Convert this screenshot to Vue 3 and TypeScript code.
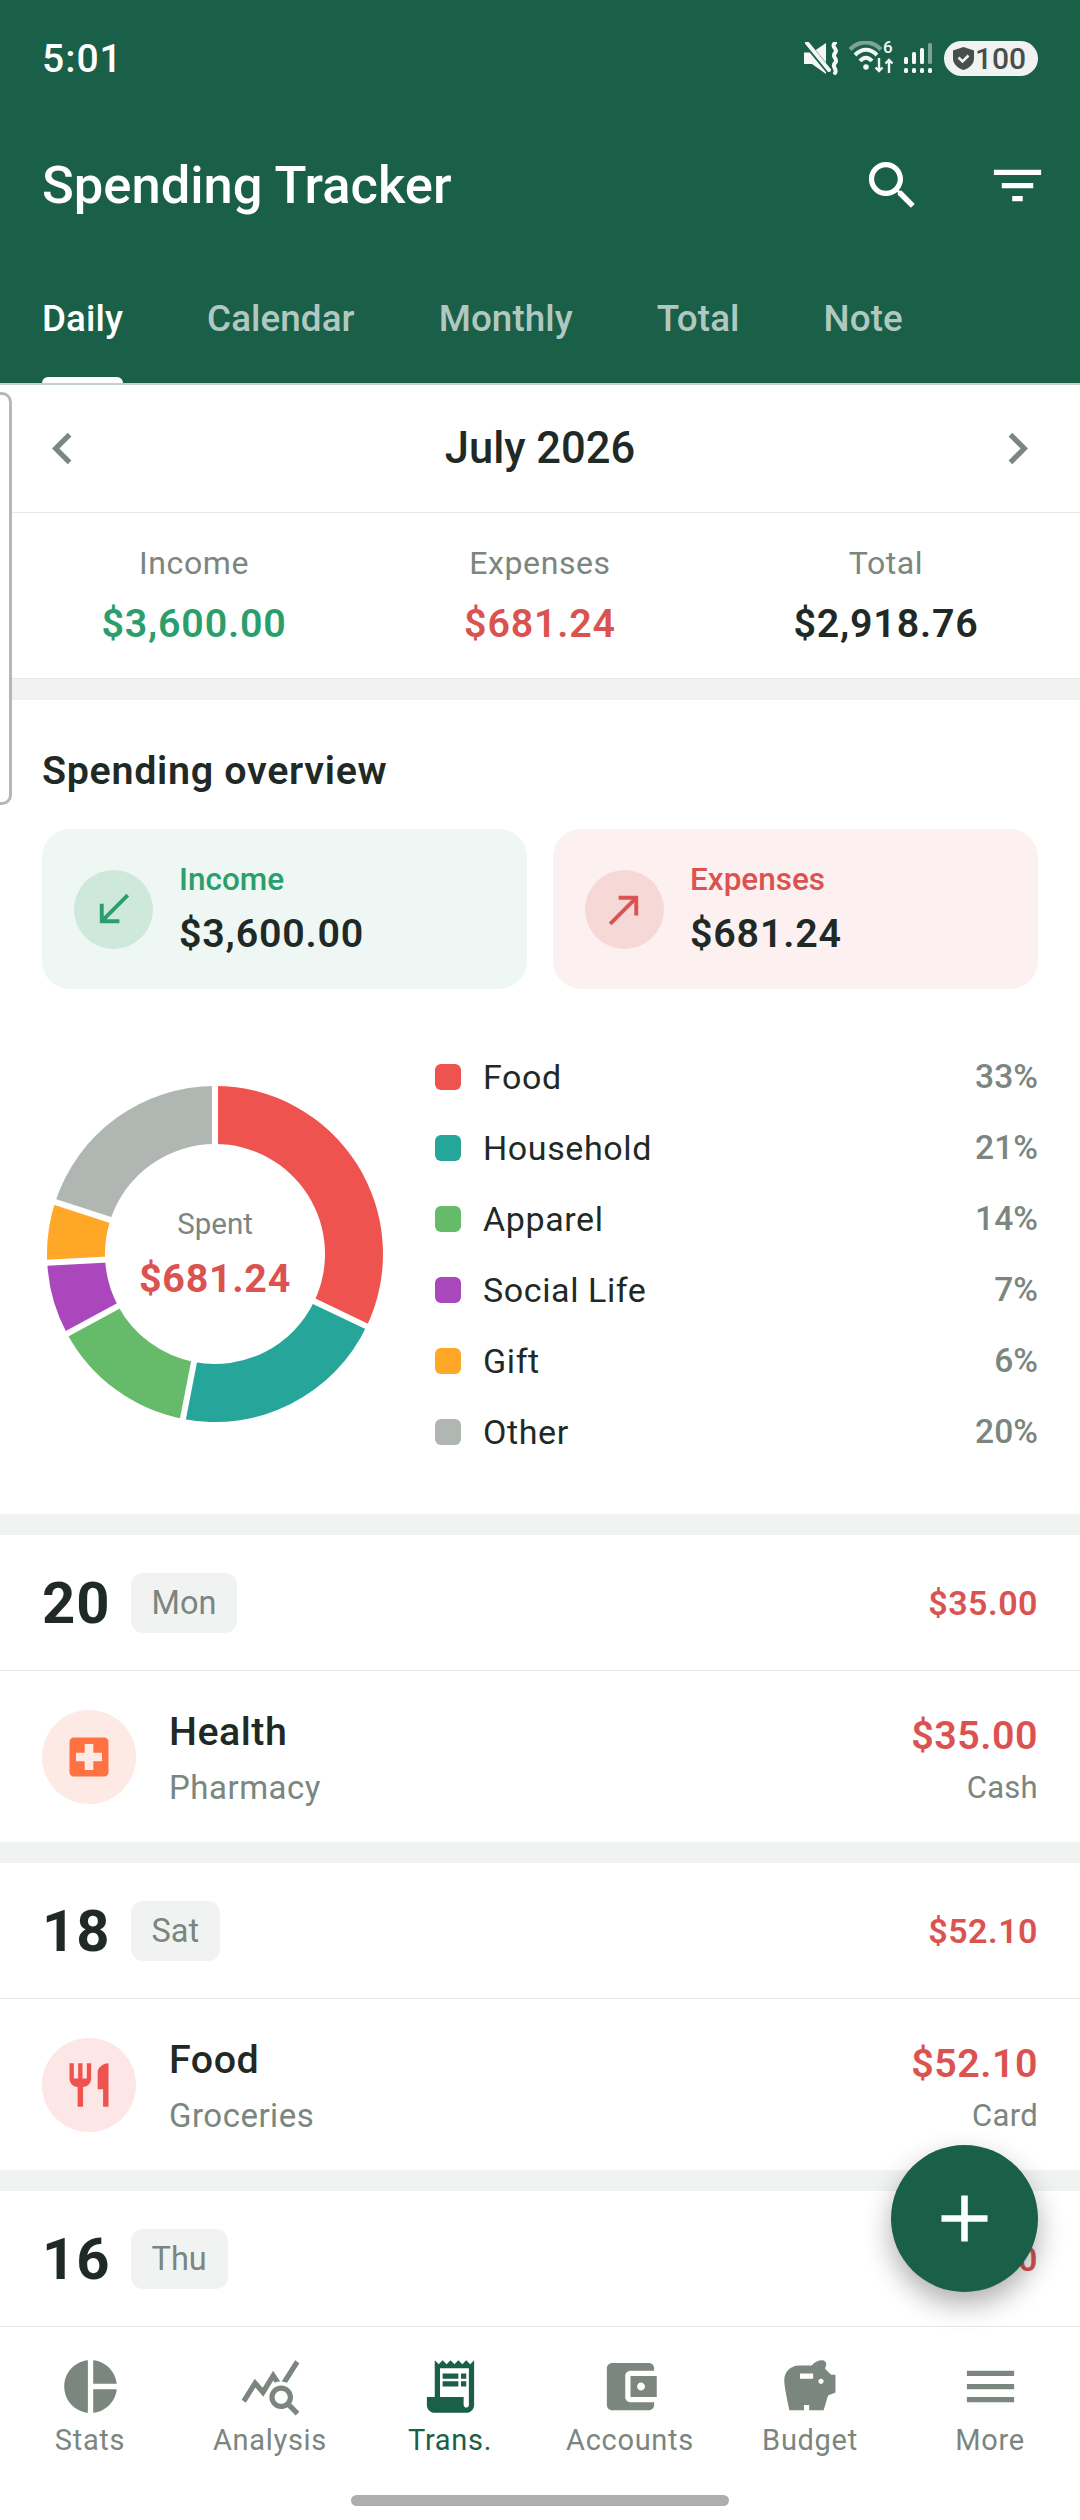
<template>
  <div class="phone">
    <header class="top">
      <div class="status">
        <span class="time">5:01</span>
        <div class="status-icons">
          <svg class="ic-mute" width="36" height="33" viewBox="0 0 36 33">
            <path d="M0 10.500h8L22 1v31L8 22H0z" fill="#f4f7f5" />
            <path d="M1 0l24 29" stroke="#1a5f47" stroke-width="6" />
            <path d="M3 1l22 27" stroke="#f4f7f5" stroke-width="4" stroke-linecap="round" />
            <path d="M31 1c-5 4 4 6 0 10s4 6 0 10 3 6 0 10" fill="none" stroke="#f4f7f5" stroke-width="4" stroke-linecap="round" />
          </svg>
          <div class="wifi">
            <svg width="48" height="34" viewBox="0 0 48 34">
              <path d="M2 8.500C11-1 24-1 33 8.500" fill="none" stroke="#f4f7f5" stroke-opacity=".45" stroke-width="4" />
              <path d="M7 14c7-7 15-7 22 0" fill="none" stroke="#f4f7f5" stroke-width="4" />
              <path d="M12 20c4-4.500 8-4.500 12 0" fill="none" stroke="#f4f7f5" stroke-width="4" />
              <circle cx="18" cy="26" r="2.800" fill="#f4f7f5" />
              <path d="M31 17v13m-3.500-3.500L31 30l3.500-3.500M41 32V19m-3.500 3.500L41 19l3.500 3.500" fill="none" stroke="#f4f7f5" stroke-width="2.400" />
            </svg>
            <span class="wifi-six">6</span>
          </div>
          <svg class="ic-signal" width="30" height="31" viewBox="0 0 30 31">
            <g fill="#f4f7f5">
              <rect x="0" y="14" width="4" height="7" rx="1.500" />
              <rect x="8" y="9" width="4" height="12" rx="1.500" />
              <rect x="16" y="5" width="4" height="16" rx="1.500" />
              <rect x="24" y="0" width="4" height="21" rx="1.500" fill-opacity=".45" />
              <rect x="0" y="25" width="4" height="5" rx="1.500" />
              <rect x="8" y="25" width="4" height="5" rx="1.500" />
              <rect x="16" y="25" width="4" height="5" rx="1.500" />
              <rect x="24" y="25" width="4" height="5" rx="1.500" />
            </g>
          </svg>
          <div class="battery">
            <svg width="21" height="23" viewBox="0 0 21 23">
              <path d="M10.500 0L21 3.500v8c0 5.500-4.500 9.500-10.500 11.500C4.500 21 0 17 0 11.500v-8z" fill="#474f4d" />
              <path d="M5.500 10.500l4 4 6-6" fill="none" stroke="#f0f3f2" stroke-width="2.600" />
            </svg>
            <span>100</span>
          </div>
        </div>
      </div>

      <div class="titlebar">
        <h1>Spending Tracker</h1>
        <div class="title-actions">
          <svg class="action" viewBox="0 0 24 24"><path :d="icons.search" /></svg>
          <svg class="action" viewBox="0 0 24 24"><path :d="icons.filter" /></svg>
        </div>
      </div>

      <nav class="tabs">
        <span v-for="t in tabs" :key="t" class="tab" :class="{ on: t === 'Daily' }">{{ t }}</span>
      </nav>
    </header>

    <main class="content">
      <div class="month">
        <svg class="chev" viewBox="0 0 24 24"><path d="M15.410 7.410L14 6l-6 6 6 6 1.410-1.410L10.830 12z" /></svg>
        <span class="month-name">July 2026</span>
        <svg class="chev" viewBox="0 0 24 24"><path d="M10 6L8.590 7.410 13.170 12l-4.580 4.590L10 18l6-6z" /></svg>
      </div>

      <div class="summary">
        <div v-for="s in summary" :key="s.label" class="sum-col">
          <span class="sum-label">{{ s.label }}</span>
          <span class="sum-value" :class="s.cls">{{ s.value }}</span>
        </div>
      </div>

      <div class="gap"></div>

      <section class="overview">
        <h2>Spending overview</h2>
        <div class="cards">
          <div class="card card-in">
            <div class="card-ic">
              <svg viewBox="0 0 24 24"><path d="M15 19v-2H8.410L20 5.410 18.590 4 7 15.590V9H5v10z" /></svg>
            </div>
            <div class="card-text">
              <span class="card-label">Income</span>
              <span class="card-value">$3,600.00</span>
            </div>
          </div>
          <div class="card card-out">
            <div class="card-ic">
              <svg viewBox="0 0 24 24"><path d="M9 5v2h6.590L4 18.590 5.410 20 17 8.410V15h2V5z" /></svg>
            </div>
            <div class="card-text">
              <span class="card-label">Expenses</span>
              <span class="card-value">$681.24</span>
            </div>
          </div>
        </div>

        <div class="chart-row">
          <div class="donut">
            <svg width="336" height="336" viewBox="-168 -168 336 336">
              <path v-for="s in slices" :key="s.color" :d="s.d" :fill="s.color" />
              <line
                v-for="(l, i) in cuts"
                :key="i"
                :x1="l.x1"
                :y1="l.y1"
                :x2="l.x2"
                :y2="l.y2"
                stroke="#fff"
                stroke-width="6"
              />
            </svg>
            <div class="donut-label">
              <span class="spent">Spent</span>
              <span class="spent-value">$681.24</span>
            </div>
          </div>

          <ul class="legend">
            <li v-for="c in categories" :key="c.name">
              <i class="dot" :style="{ background: c.color }"></i>
              <span class="cat-name">{{ c.name }}</span>
              <span class="cat-pct">{{ c.pct }}%</span>
            </li>
          </ul>
        </div>
      </section>

      <template v-for="d in days" :key="d.date">
        <div class="gap"></div>
        <div class="day-head">
          <span class="day-num">{{ d.date }}</span>
          <span class="day-chip">{{ d.weekday }}</span>
          <span class="day-total">{{ d.total }}</span>
        </div>
        <div v-if="d.name" class="row">
          <div class="row-ic" :style="{ background: d.tint }">
            <svg viewBox="0 0 24 24" :style="{ fill: d.color }"><path :d="d.icon" /></svg>
          </div>
          <div class="row-text">
            <span class="row-name">{{ d.name }}</span>
            <span class="row-sub">{{ d.sub }}</span>
          </div>
          <div class="row-right">
            <span class="row-amount">{{ d.total }}</span>
            <span class="row-method">{{ d.method }}</span>
          </div>
        </div>
      </template>
    </main>

    <footer class="bottom">
      <div class="nav">
        <div v-for="n in nav" :key="n.label" class="nav-item" :class="{ on: n.label === 'Trans.' }">
          <svg viewBox="0 0 24 24"><path :d="n.icon" fill-rule="evenodd" /></svg>
          <span>{{ n.label }}</span>
        </div>
      </div>
      <div class="home"></div>
    </footer>

    <div class="edge-handle"></div>

    <button class="fab">
      <svg viewBox="0 0 24 24"><path d="M19 13h-6v6h-2v-6H5v-2h6V5h2v6h6v2z" /></svg>
    </button>
  </div>
</template>

<script setup lang="ts">
const icons = {
  search:
    'M15.5 14h-.79l-.28-.27C15.41 12.59 16 11.11 16 9.5 16 5.91 13.09 3 9.5 3S3 5.91 3 9.5 5.91 16 9.5 16c1.61 0 3.09-.59 4.23-1.57l.27.28v.79l5 4.99L20.49 19l-4.99-5zm-6 0C7.01 14 5 11.99 5 9.5S7.01 5 9.5 5 14 7.01 14 9.5 11.99 14 9.5 14z',
  filter: 'M10 18h4v-2h-4v2zM3 6v2h18V6H3zm3 7h12v-2H6v2z',
}

const tabs = ['Daily', 'Calendar', 'Monthly', 'Total', 'Note']

const summary = [
  { label: 'Income', value: '$3,600.00', cls: 'green' },
  { label: 'Expenses', value: '$681.24', cls: 'red' },
  { label: 'Total', value: '$2,918.76', cls: '' },
]

const categories = [
  { name: 'Food', pct: 33, color: '#ef5350' },
  { name: 'Household', pct: 21, color: '#26a69a' },
  { name: 'Apparel', pct: 14, color: '#66bb6a' },
  { name: 'Social Life', pct: 7, color: '#ab47bc' },
  { name: 'Gift', pct: 6, color: '#ffa726' },
  { name: 'Other', pct: 20, color: '#b0b7b2' },
]

// measured off the ring, the slices are not exactly the rounded percentages
const stops = [0, 115.5, 191, 241.7, 267, 288, 360]
const R = 168
const r = 110

function pt(radius: number, deg: number) {
  const a = (deg * Math.PI) / 180
  return `${(radius * Math.sin(a)).toFixed(2)} ${(-radius * Math.cos(a)).toFixed(2)}`
}

const slices = categories.map((c, i) => {
  const a = stops[i]
  const b = stops[i + 1]
  const big = b - a > 180 ? 1 : 0
  return {
    color: c.color,
    d: `M${pt(R, a)}A${R} ${R} 0 ${big} 1 ${pt(R, b)}L${pt(r, b)}A${r} ${r} 0 ${big} 0 ${pt(r, a)}Z`,
  }
})

const cuts = stops.slice(0, 6).map((deg) => {
  const a = (deg * Math.PI) / 180
  return {
    x1: (r - 3) * Math.sin(a),
    y1: -(r - 3) * Math.cos(a),
    x2: (R + 3) * Math.sin(a),
    y2: -(R + 3) * Math.cos(a),
  }
})

const days = [
  {
    date: 20,
    weekday: 'Mon',
    total: '$35.00',
    name: 'Health',
    sub: 'Pharmacy',
    method: 'Cash',
    tint: '#fdeae4',
    color: '#ff7043',
    icon: 'M19 3H5c-1.1 0-1.99.9-1.99 2L3 19c0 1.1.9 2 2 2h14c1.1 0 2-.9 2-2V5c0-1.1-.9-2-2-2zm-1 11h-4v4h-4v-4H6v-4h4V6h4v4h4v4z',
  },
  {
    date: 18,
    weekday: 'Sat',
    total: '$52.10',
    name: 'Food',
    sub: 'Groceries',
    method: 'Card',
    tint: '#fde6e6',
    color: '#ef5350',
    icon: 'M11 9H9V2H7v7H5V2H3v7c0 2.12 1.66 3.84 3.75 3.97V22h2.5v-9.03C11.34 12.84 13 11.12 13 9V2h-2v7zm5-3v8h2.5v8H21V2c-2.76 0-5 2.24-5 4z',
  },
  { date: 16, weekday: 'Thu', total: '$48.00' },
] as Array<Record<string, any>>

const nav = [
  {
    label: 'Stats',
    icon: 'M11 2v20c-5.07-.5-9-4.79-9-10s3.93-9.5 9-10zm2.03 0v8.99H22c-.47-4.74-4.24-8.52-8.97-8.99zm0 11.01V22c4.74-.47 8.5-4.25 8.97-8.99h-8.97z',
  },
  {
    label: 'Analysis',
    icon: 'M19.88 18.47c.44-.7.7-1.51.7-2.39 0-2.49-2.01-4.5-4.5-4.5s-4.5 2.01-4.5 4.5 2.01 4.5 4.49 4.5c.88 0 1.7-.26 2.39-.7L21.58 23 23 21.58l-3.12-3.11zm-3.8.11c-1.38 0-2.5-1.12-2.5-2.5s1.12-2.5 2.5-2.5 2.5 1.12 2.5 2.5-1.12 2.5-2.5 2.5zm-.36-8.5c-.74.02-1.45.18-2.1.45l-.55-.83-3.8 6.18-3.01-3.52-3.63 5.81L1 17l5-8 3 3.5L13 6l2.72 4.08zm2.59.5c-.64-.28-1.33-.45-2.05-.49L21.38 2 23 3.18l-4.69 7.4z',
  },
  {
    label: 'Trans.',
    icon: 'M19.5 3.500L18 2l-1.500 1.500L15 2l-1.500 1.500L12 2l-1.500 1.500L9 2 7.500 3.500 6 2v14H3v3c0 1.660 1.340 3 3 3h12c1.660 0 3-1.340 3-3V2l-1.500 1.500zM19 19c0 .55-.45 1-1 1s-1-.45-1-1v-3H8V5h11v14zM9 7h6v2H9zM16 7h2v2h-2zM9 10h6v2H9zM16 10h2v2h-2z',
  },
  {
    label: 'Accounts',
    icon: 'M21 18v1c0 1.100-.9 2-2 2H5c-1.110 0-2-.9-2-2V5c0-1.100.89-2 2-2h14c1.100 0 2 .9 2 2v1h-9c-1.110 0-2 .9-2 2v8c0 1.100.89 2 2 2h9zm-9-2h10V8H12v8zm4-2.500c-.83 0-1.500-.67-1.500-1.500s.67-1.500 1.500-1.500 1.500.67 1.500 1.500-.67 1.500-1.500 1.500z',
  },
  {
    label: 'Budget',
    icon: 'M19.830 7.500l-2.270-2.270c.07-.42.18-.81.32-1.150.08-.18.12-.37.12-.58 0-.83-.67-1.500-1.500-1.500-1.640 0-3.090.79-4 2h-5C4.460 4 2 6.460 2 9.500S4 21 4 21h5.500v-2h2v2H17l1.680-5.590 2.820-1.090V7.500h-1.670zM13 9H8V7h5v2zm3 2c-.55 0-1-.45-1-1s.45-1 1-1 1 .45 1 1-.45 1-1 1z',
  },
  { label: 'More', icon: 'M3 18h18v-2H3v2zm0-5h18v-2H3v2zm0-7v2h18V6H3z' },
]
</script>

<style>
html,
body {
  margin: 0;
  background: #fff;
}
</style>

<style scoped>
.phone {
  position: relative;
  width: 1080px;
  height: 2520px;
  display: flex;
  flex-direction: column;
  overflow: hidden;
  background: #fff;
  font-family: Roboto, "Noto Sans", sans-serif;
  color: #1f2a26;
}

.top {
  height: 383px;
  flex: none;
  background: #1a5f47;
  border-bottom: 2px solid #c4d2cc;
  color: #fff;
}

.status {
  height: 116px;
  padding: 0 42px;
  display: flex;
  align-items: center;
  justify-content: space-between;
}

.time {
  padding-top: 2px;
  font-size: 39px;
  font-weight: 500;
  letter-spacing: 1px;
}

.status-icons {
  display: flex;
  align-items: center;
}

.ic-mute {
  margin-right: 8px;
}

.ic-signal {
  margin: 0 10px 0 8px;
}

.wifi {
  position: relative;
  height: 34px;
}

.wifi-six {
  position: absolute;
  left: 35px;
  top: -4px;
  font-size: 17px;
  line-height: 20px;
  font-weight: 500;
  color: #f4f7f5;
}

.battery {
  width: 94px;
  height: 35px;
  box-sizing: border-box;
  padding-left: 9px;
  border-radius: 18px;
  background: #f0f3f2;
  color: #474f4d;
  display: flex;
  align-items: center;
  gap: 1px;
  font-size: 30px;
  font-weight: 500;
}

.titlebar {
  height: 138px;
  padding: 0 31px 0 42px;
  display: flex;
  align-items: center;
  justify-content: space-between;
}

h1 {
  margin: 0;
  font-size: 52.5px;
  font-weight: 500;
}

.title-actions {
  display: flex;
  gap: 62px;
}

.action {
  width: 63px;
  height: 63px;
  fill: #fff;
}

.tabs {
  height: 129px;
  padding: 0 42px;
  display: flex;
  gap: 84px;
}

.tab {
  position: relative;
  display: flex;
  align-items: center;
  font-size: 36.75px;
  font-weight: 500;
  letter-spacing: 0.1px;
  color: rgba(255, 255, 255, 0.68);
}

.tab.on {
  color: #fff;
}

.tab.on::after {
  content: "";
  position: absolute;
  left: 0;
  right: 0;
  bottom: 0;
  height: 6px;
  border-radius: 6px 6px 0 0;
  background: #fff;
}

.content {
  flex: 1;
  min-height: 0;
  overflow: hidden;
}

.month {
  height: 127px;
  padding: 0 31px;
  border-bottom: 1px solid #e6e9e8;
  display: flex;
  align-items: center;
  justify-content: space-between;
}

.chev {
  width: 63px;
  height: 63px;
  fill: #7a867e;
}

.month-name {
  font-size: 43.5px;
  font-weight: 500;
}

.summary {
  height: 165px;
  padding: 0 21px;
  display: grid;
  grid-template-columns: repeat(3, 1fr);
  border-bottom: 1px solid #e6e9e8;
}

.sum-col {
  display: flex;
  flex-direction: column;
  align-items: center;
  justify-content: center;
  gap: 18px;
}

.sum-label {
  font-size: 32px;
  letter-spacing: 0.6px;
  color: #7a867e;
}

.sum-value {
  font-size: 39.4px;
  font-weight: 600;
  letter-spacing: 0.8px;
}

.green {
  color: #2b9e6c;
}

.red {
  color: #db5350;
}

.gap {
  height: 21px;
  background: #f1f3f2;
}

.overview {
  height: 814px;
  box-sizing: border-box;
  padding: 0 42px;
}

h2 {
  margin: 0;
  height: 117px;
  padding-top: 12px;
  display: flex;
  align-items: center;
  font-size: 39.4px;
  font-weight: 600;
  letter-spacing: 0.7px;
}

.cards {
  display: grid;
  grid-template-columns: 485px 485px;
  gap: 26px;
}

.card {
  height: 160px;
  box-sizing: border-box;
  padding-left: 32px;
  border-radius: 28px;
  display: flex;
  align-items: center;
  gap: 26px;
}

.card-in {
  background: #eef7f3;
}

.card-out {
  background: #fcf1f0;
}

.card-ic {
  width: 79px;
  height: 79px;
  border-radius: 50%;
  display: flex;
  align-items: center;
  justify-content: center;
}

.card-ic svg {
  width: 47px;
  height: 47px;
}

.card-in .card-ic {
  background: #cfe8dc;
  fill: #2b9e6c;
}

.card-out .card-ic {
  background: #f6d8d6;
  fill: #db5350;
}

.card-text {
  display: flex;
  flex-direction: column;
  gap: 12px;
}

.card-label {
  font-size: 31.5px;
  font-weight: 500;
}

.card-in .card-label {
  color: #2b9e6c;
}

.card-out .card-label {
  color: #db5350;
}

.card-value {
  font-size: 39.4px;
  font-weight: 600;
  letter-spacing: 0.8px;
}

.chart-row {
  margin-top: 52px;
  display: flex;
  align-items: center;
  gap: 52px;
}

.donut {
  position: relative;
  flex: none;
  width: 336px;
  height: 336px;
  margin-left: 5px;
}

.donut svg {
  display: block;
}

.donut-label {
  position: absolute;
  inset: 0;
  display: flex;
  flex-direction: column;
  align-items: center;
  justify-content: center;
  gap: 14px;
}

.spent {
  font-size: 29.5px;
  color: #7a867e;
}

.spent-value {
  font-size: 39.4px;
  font-weight: 700;
  letter-spacing: 0.7px;
  color: #db5350;
}

.legend {
  flex: 1;
  margin: 0;
  padding: 0;
  list-style: none;
}

.legend li {
  height: 71px;
  display: flex;
  align-items: center;
}

.dot {
  width: 26px;
  height: 26px;
  margin-right: 22px;
  border-radius: 6px;
}

.cat-name {
  flex: 1;
  font-size: 34px;
  letter-spacing: 0.6px;
}

.cat-pct {
  font-size: 33.6px;
  font-weight: 500;
  color: #7a867e;
}

.day-head {
  height: 135px;
  padding: 0 42px;
  border-bottom: 1px solid #e6e9e8;
  display: flex;
  align-items: center;
}

.day-num {
  font-size: 58px;
  font-weight: 700;
  letter-spacing: 1px;
}

.day-chip {
  height: 60px;
  margin-left: 20px;
  padding: 0 21px;
  border-radius: 12px;
  background: #f1f3f2;
  display: flex;
  align-items: center;
  font-size: 32.5px;
  color: #7a867e;
}

.day-total {
  margin-left: auto;
  font-size: 34px;
  font-weight: 600;
  letter-spacing: 0.5px;
  color: #db5350;
}

.row {
  height: 171px;
  padding: 0 42px;
  display: flex;
  align-items: center;
}

.row-ic {
  width: 94px;
  height: 94px;
  flex: none;
  border-radius: 50%;
  display: flex;
  align-items: center;
  justify-content: center;
}

.row-ic svg {
  width: 52px;
  height: 52px;
}

.row-text {
  margin-left: 33px;
  padding-top: 2px;
  flex: 1;
  display: flex;
  flex-direction: column;
  gap: 13px;
}

.row-name {
  font-size: 39.4px;
  font-weight: 500;
  letter-spacing: 0.5px;
}

.row-sub {
  font-size: 33px;
  letter-spacing: 0.5px;
  color: #7a867e;
}

.row-right {
  padding-top: 5px;
  display: flex;
  flex-direction: column;
  align-items: flex-end;
  gap: 10px;
}

.row-amount {
  font-size: 39.4px;
  font-weight: 600;
  letter-spacing: 0.5px;
  color: #db5350;
}

.row-method {
  font-size: 31px;
  letter-spacing: 0.3px;
  color: #7a867e;
}

.bottom {
  height: 194px;
  flex: none;
  box-sizing: border-box;
  border-top: 1px solid #e6e9e8;
  background: #fff;
  display: flex;
  flex-direction: column;
  align-items: center;
}

.nav {
  align-self: stretch;
  display: grid;
  grid-template-columns: repeat(6, 1fr);
  padding-top: 28px;
}

.nav-item {
  display: flex;
  flex-direction: column;
  align-items: center;
  font-size: 29px;
  letter-spacing: 0.7px;
  color: #7a867e;
  fill: #7a867e;
}

.nav-item svg {
  width: 63px;
  height: 63px;
  margin-bottom: 5px;
}

.nav-item.on {
  color: #1a5f47;
  fill: #1a5f47;
}

.home {
  width: 378px;
  height: 11px;
  margin-top: 38px;
  border-radius: 6px;
  background: #aeaeae;
}

.edge-handle {
  position: absolute;
  left: -12px;
  top: 392px;
  width: 18px;
  height: 407px;
  border: 3px solid #b4b8b6;
  border-radius: 10px;
  background: #fff;
}

.fab {
  position: absolute;
  left: 891px;
  top: 2145px;
  width: 147px;
  height: 147px;
  padding: 0;
  border: 0;
  border-radius: 50%;
  background: #1a5f47;
  box-shadow: 0 12px 28px rgba(0, 0, 0, 0.32);
  display: flex;
  align-items: center;
  justify-content: center;
}

.fab svg {
  width: 79px;
  height: 79px;
  fill: #fff;
}
</style>
